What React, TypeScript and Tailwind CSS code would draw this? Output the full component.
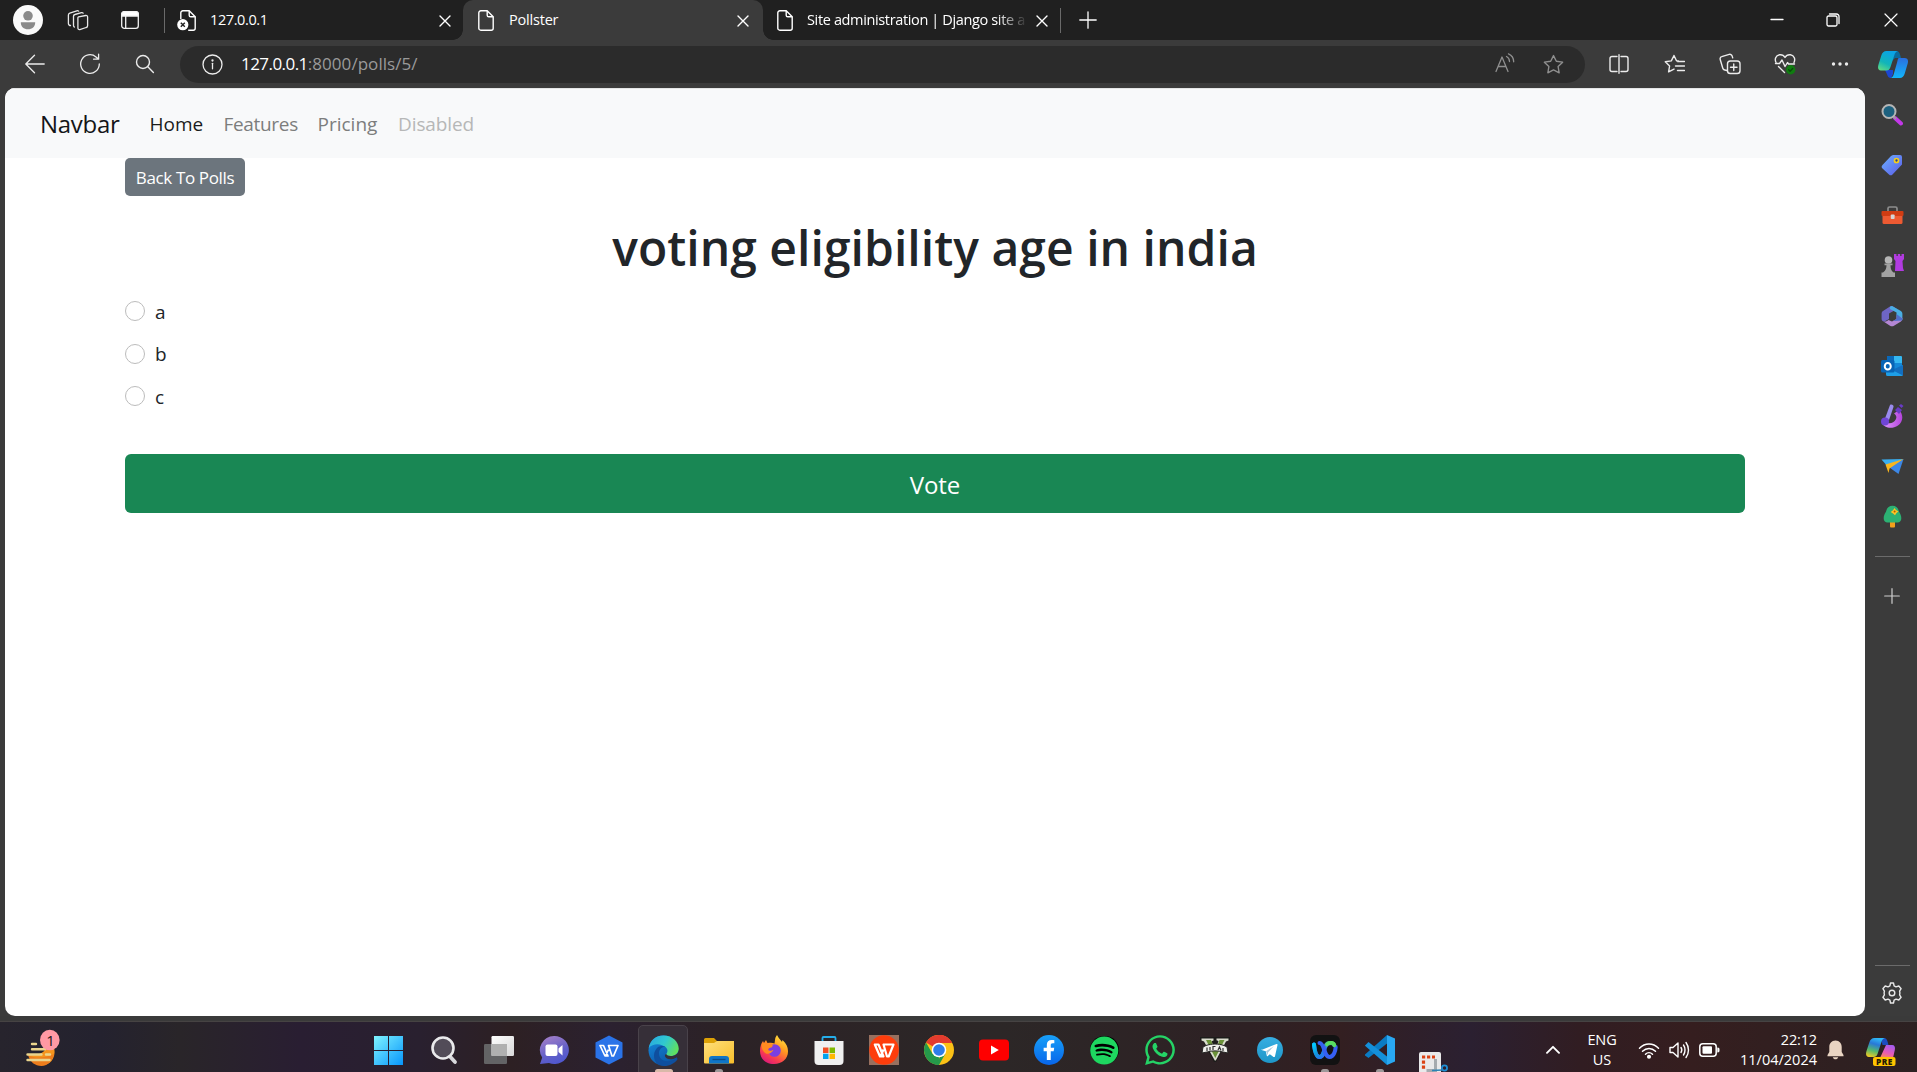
import React, { type ReactNode } from 'react';
import { FaSpotify, FaWhatsapp, FaFacebookF } from 'react-icons/fa';

type IconProps = { children: ReactNode; size?: number; box?: number; className?: string; sw?: number };

function Line({ children, size = 24, box = 24, className = '', sw = 1.3 }: IconProps) {
  return (
    <svg width={size} height={size} viewBox={`0 0 ${box} ${box}`} fill="none" stroke="currentColor" strokeWidth={sw} strokeLinecap="round" strokeLinejoin="round" className={`shrink-0 ${className}`}>
      {children}
    </svg>
  );
}

function Color({ children, size = 24, box = 24, className = '' }: IconProps) {
  return (
    <svg width={size} height={size} viewBox={`0 0 ${box} ${box}`} className={`shrink-0 ${className}`}>
      {children}
    </svg>
  );
}

function CloseIcon() {
  return (
    <Line size={12} box={12} sw={1.4}>
      <path d="M1 1l10 10M11 1L1 11" />
    </Line>
  );
}

function PageIcon() {
  return (
    <svg width="16" height="21" viewBox="0 0 16 21" fill="none" stroke="#fff" strokeWidth="1.4" strokeLinejoin="round" className="shrink-0">
      <path d="M2.8.8h6.4l6 6v11.4a2 2 0 0 1-2 2H2.8a2 2 0 0 1-2-2V2.8a2 2 0 0 1 2-2z" />
      <path d="M9.2.8v4.4a1.6 1.6 0 0 0 1.6 1.6h4.4" />
    </svg>
  );
}

function ErrorPageIcon() {
  return (
    <svg width="19" height="21" viewBox="0 0 19 21" fill="none" stroke="#fff" strokeWidth="1.4" strokeLinejoin="round" className="shrink-0">
      <path d="M3.8 9V2.8a2 2 0 0 1 2-2h6.4l6 6v11.4a2 2 0 0 1-2 2h-5" />
      <path d="M12.2.8v4.4a1.6 1.6 0 0 0 1.6 1.6h4.4" />
      <circle cx="5.8" cy="14.7" r="5.6" fill="#fff" stroke="none" />
      <path d="M3.8 12.7l4 4M7.8 12.7l-4 4" stroke="#202020" />
    </svg>
  );
}

function TabStrip() {
  return (
    <div className="flex h-10 items-center bg-[#202020] text-[14.5px] text-white">
      <svg width="30" height="30" viewBox="0 0 30 30" className="ml-[13px] shrink-0">
        <circle cx="15" cy="15" r="15" fill="#fafafa" />
        <circle cx="15" cy="10.8" r="4.8" fill="#8a8a8a" />
        <path d="M7.8 17.2h14.4c0 4.800-3 7-7.200 7s-7.200-2.200-7.200-7z" fill="#8a8a8a" />
      </svg>
      <svg width="22" height="22" viewBox="0 0 22 22" fill="none" stroke="#e8e8e8" strokeWidth="1.3" strokeLinejoin="round" className="ml-[24px] shrink-0">
        <path d="M11.500 7.800l7.200-1.300a1.600 1.600 0 0 1 1.900 1.500v8.700a1.800 1.800 0 0 1-1.500 1.800l-6.300 2.100a1.500 1.500 0 0 1-1.900-1.500V9.500a1.700 1.700 0 0 1 .6-1.700z" />
        <path d="M7.800 18.300a2 2 0 0 1-1.300-1.900V7.300c0-.9.500-1.600 1.400-1.800l6.600-1.800c.9-.2 1.700.2 1.900 1" />
        <path d="M4 16.400a2 2 0 0 1-2.600-1.900V6c0-.9.500-1.600 1.400-1.900l7-2.300c.9-.3 1.800 0 2 .9" />
      </svg>
      <svg width="18" height="18" viewBox="0 0 18 18" fill="none" stroke="#f2f2f2" strokeWidth="1.300" className="ml-[32px] shrink-0">
        <rect x=".7" y=".7" width="16.600" height="16.600" rx="2.600" />
        <path d="M.7 5V3.200A2.500 2.500 0 0 1 3.200.7h11.600a2.500 2.500 0 0 1 2.500 2.500V5z" fill="#fff" />
        <path d="M4.700 5v12" />
      </svg>
      <div className="ml-[25px] h-[25px] w-px bg-[#6a6a6a]" />
      <div className="ml-[12px] flex w-[286px] items-center">
        <ErrorPageIcon />
        <span className="ml-[14px] flex-1 tracking-[-0.400px]">127.0.0.1</span>
        <div className="mr-[12px] pt-px"><CloseIcon /></div>
      </div>
      <div className="flex h-10 w-[300px] items-center rounded-t-[10px] bg-[#3b3b3b]">
        <div className="-ml-[10px] h-[10px] w-[10px] self-end bg-[radial-gradient(circle_at_0_0,#202020_9.500px,#3b3b3b_10px)]" />
        <div className="ml-[15px]"><PageIcon /></div>
        <span className="ml-[15px] flex-1 tracking-[-0.2px]">Pollster</span>
        <div className="mr-[14px] pt-px"><CloseIcon /></div>
        <div className="-mr-[10px] h-[10px] w-[10px] self-end bg-[radial-gradient(circle_at_100%_0,#202020_9.500px,#3b3b3b_10px)]" />
      </div>
      <div className="ml-[14px]"><PageIcon /></div>
      <div className="ml-[14px] w-[218px] whitespace-nowrap tracking-[-0.360px] [mask-image:linear-gradient(to_right,#000_190px,transparent_221px)]">
        Site administration | Django site a
      </div>
      <div className="ml-[11px] pt-px"><CloseIcon /></div>
      <div className="ml-[12px] h-[25px] w-px bg-[#6a6a6a]" />
      <Line size={18} box={18} className="ml-[18px]"><path d="M9 .8v16.400M.8 9h16.400" /></Line>
      <div className="ml-auto flex items-center">
        <Line size={14} box={14} className="mr-[42px]"><path d="M1 6.500h12" /></Line>
        <Line size={14} box={14} className="mr-[44px]">
          <rect x="1" y="3" width="10" height="10" rx="1.500" />
          <path d="M3.500 1h7A2.500 2.500 0 0 1 13 3.500v7" />
        </Line>
        <Line size={14} box={14} className="mr-[19px]" sw={1.200}><path d="M1 1l12 12M13 1L1 13" /></Line>
      </div>
    </div>
  );
}

const STAR = 'M10 1.500l2.700 5.400 6 .9-4.300 4.200 1 5.900L10 15.100l-5.400 2.800 1-5.900L1.300 7.800l6-.9z';

function Toolbar() {
  return (
    <div className="flex h-12 items-center bg-[#3b3b3b] text-[#ececec]">
      <Line size={20} box={20} className="ml-[25px]"><path d="M19.200 10H1M9.500 1.200L.8 10l8.700 8.800" /></Line>
      <Line size={22} box={22} className="ml-[34px]"><path d="M20.300 11A9.300 9.300 0 1 1 17 3.900l2.500 2.200M19.600 1.200v5h-5" /></Line>
      <Line size={20} box={20} className="ml-[34px]" sw={1.400}><circle cx="8" cy="8" r="6.500" /><path d="M12.800 12.800l5.600 5.600" /></Line>
      <div className="ml-[25px] flex h-[37px] w-[1405px] items-center rounded-full bg-[#2b2b2b] pl-[22px] text-[17px]">
        <Line size={21} box={21}><circle cx="10.500" cy="10.500" r="9.500" /><path d="M10.500 9.300v5.500" /><circle cx="10.500" cy="6.500" r=".5" fill="currentColor" /></Line>
        <span className="ml-[18px] tracking-[-0.55px] text-white">127.0.0.1</span>
        <span className="tracking-[0.050px] text-[#9a9a9a]">:8000/polls/5/</span>
        <div className="ml-auto mr-[21px] flex items-center gap-[29px] text-[#8f8f8f]">
          <Line size={20} box={20} className="relative left-px -top-px">
            <path d="M1 18.500L7 4l6 14.500M3.300 13.500h7.500M11.500 3.500c2.200 1 3 2.700 3 5M13.500.8c3.500 1.500 5.200 4.500 5.200 8" />
          </Line>
          <Line size={21} box={20}><path d={STAR} /></Line>
        </div>
      </div>
      <div className="ml-[24px] flex items-center">
        <Line size={20} box={20} sw={1.400}><path d="M8 2.500H3A2 2 0 0 0 1 4.500v11a2 2 0 0 0 2 2h5M12 2.500h5a2 2 0 0 1 2 2v11a2 2 0 0 1-2 2h-5M10 .7v18.600" /></Line>
        <Line size={21} box={21} className="ml-[35px]" sw={1.400}>
          <path d="M14.500 7l-2-.2L10 1.500 7.300 6.900l-6 .9L5.600 12l-1 5.900 5.400-2.800M13.500 7.500h7M11.500 12h9M13.500 16.500h7" />
        </Line>
        <Line size={22} box={22} className="ml-[34px]" sw={1.400}>
          <rect x="8.500" y="8" width="12.500" height="12.500" rx="2.800" />
          <path d="M14.750 11v6.500M11.500 14.250H18M8 17.500l-2.300-.5a2.500 2.500 0 0 1-1.900-1.800L1.200 6.500A2.200 2.200 0 0 1 2.700 3.700l7.500-2.300a2.300 2.300 0 0 1 2.900 1.500l.6 2" />
        </Line>
        <Line size={22} box={22} className="ml-[33px]" sw={1.400}>
          <path d="M2 9.500C.5 6.500 1.500 2.500 5.500 1.800 8 1.400 10 2.800 11 4.500c1-1.700 3-3.100 5.500-2.700 4 .7 5 4.700 3.500 7.700M1.500 10.500h4L8 7l3 6.500 2.500-4 1 1.500h6M4.500 13.500l6 6" />
          <circle cx="16.700" cy="16.800" r="4.700" fill="#107c10" stroke="none" />
          <path d="M14.700 16.800l1.400 1.500 2.600-2.800" stroke="#0a4d0a" />
        </Line>
        <Line size={18} box={18} className="ml-[35px]"><g fill="currentColor" stroke="none"><circle cx="2.500" cy="9" r="1.700" /><circle cx="9" cy="9" r="1.700" /><circle cx="15.500" cy="9" r="1.700" /></g></Line>
      </div>
      <div className="ml-auto mr-[9px]"><Copilot /></div>
    </div>
  );
}

function Copilot() {
  return (
    <svg width="30" height="27" viewBox="0 0 30 27">
      <defs>
        <linearGradient id="cpA" x1="0" y1="1" x2=".5" y2="0"><stop offset="0" stopColor="#6be07c" /><stop offset=".45" stopColor="#12b5b8" /><stop offset="1" stopColor="#0aa3e6" /></linearGradient>
        <linearGradient id="cpB" x1="0" y1="0" x2="0" y2="1"><stop offset="0" stopColor="#2a6fe0" /><stop offset="1" stopColor="#12b6fb" /></linearGradient>
      </defs>
      <path d="M17 0h1.500c2 0 2.800 1.200 3.500 3.500l1 3.500h-6l-3 3z" fill="#0a6a9e" />
      <path d="M7 19h8v4l-2 4c-2 0-3.200-1-3.900-3.500z" fill="#1b47d1" />
      <path d="M8.500 0H20c-2 .5-3 2-3.600 4L12.500 16c-.9 2.500-1.800 3.500-4 3.500H3c-3 0-3.500-2.500-2.500-6L3.300 4.500C4.300 1.500 5.800 0 8.500 0z" fill="url(#cpA)" />
      <path d="M21 7h5.500c3 0 4.100 2 3.200 5.500l-2.800 9.500c-1 3.500-2.500 5-5.200 5H12.500c2-.5 2.700-2 3.300-4l3.400-12C19.800 8.500 20 7 21 7z" fill="url(#cpB)" />
    </svg>
  );
}

function SidebarIcons() {
  const icons: ReactNode[] = [
    <Color key="search" size={22} box={22}>
      <path d="M14 14l6 5.500" stroke="#c238e8" strokeWidth="4" strokeLinecap="round" />
      <path d="M12.500 12.500l2.500 2.500" stroke="#9c9c9c" strokeWidth="2" />
      <circle cx="8" cy="7.500" r="6.500" fill="#1d617f" stroke="#b5b5b5" strokeWidth="2" />
    </Color>,
    <Color key="tag" size={22} box={22}>
      <defs><linearGradient id="tag" x1="0" y1="0" x2="1" y2="1"><stop offset="0" stopColor="#6db2ff" /><stop offset="1" stopColor="#5a5ae8" /></linearGradient></defs>
      <path d="M12 1h7a2 2 0 0 1 2 2v7.500L11.500 20.500a2.500 2.500 0 0 1-3.500 0L1.500 14.500a2.500 2.500 0 0 1 0-3.500L10 2z" fill="url(#tag)" />
      <circle cx="15.500" cy="6.500" r="2" fill="#24418e" stroke="#f6ce1c" strokeWidth="1.700" />
    </Color>,
    <Color key="tools" size={23} box={23}>
      <path d="M7 7V4.500A1.500 1.500 0 0 1 8.500 3h6A1.500 1.500 0 0 1 16 4.500V7" fill="none" stroke="#8d8d8d" strokeWidth="1.700" />
      <rect x="1.500" y="10" width="20" height="10" rx="1.500" fill="#ed5a32" />
      <rect x=".5" y="7" width="22" height="5" rx="1" fill="#d03c13" />
      <rect x="9.800" y="10.500" width="3.800" height="4.500" rx=".8" fill="#d5d5d5" />
    </Color>,
    <Color key="games" size={23} box={23}>
      <path d="M13 0h2.500v2h1.300V0h2.400v2h1.300V0H23v5l-1.500 2 .5 7 1 3h-9l.5-10L13 5z" fill="#b13be0" />
      <circle cx="7.500" cy="6" r="3.800" fill="#b6b6b6" />
      <path d="M3.500 9.500h8v1.800h-2c0 3 .5 5.200 3 7.200h1.500V23H.5v-4.500H2c2.700-2 3.500-4.200 3.500-7.200h-2z" fill="#a2a2a2" />
    </Color>,
    <Color key="m365" size={22} box={22}>
      <path d="M9 1.500L2 6C1 6.700.6 7.500.6 9v5c0 2 1.800 3.200 3.500 2.200L8 14V8.500l8-4.500-3.500-2.300C11.500 1 10 .9 9 1.500z" fill="#6e65c4" />
      <path d="M11 1l8.500 4.700C21 6.500 21.400 7.500 21.400 9v5.500L15.500 11V7.500L9 4c-.8-1.500.5-3 2-3z" fill="#49aee4" />
      <path d="M21.400 13.500c0 1.500-.5 2.200-1.500 2.900L13 20.800c-1.200.7-2.800.7-4 0l-6.500-4.200c2 .5 3-.3 5-1.500l3.500 1.400 4.500-2.500v-3l4.500 1z" fill="#b487d4" />
      <path d="M15.500 9v5L12 16l9-.5c.4-.6.4-1.500.4-2z" fill="#4e6ecb" />
    </Color>,
    <Color key="outlook" size={22} box={22}>
      <rect x="6" y="1" width="15" height="14" rx="1" fill="#35b8f1" /><path d="M6 1h7v7H6z" fill="#0a68b8" /><path d="M13 8h8v6h-8z" fill="#1488d8" />
      <path d="M5 10l8.500 5L22 10v9.500a1.500 1.500 0 0 1-1.500 1.500h-14A1.500 1.500 0 0 1 5 19.500z" fill="#1e9fe8" /><path d="M22 10v10.500L11 15z" fill="#136ebf" />
      <rect x="0" y="5" width="13.500" height="12.500" rx="1.500" fill="#0864b5" /><ellipse cx="6.750" cy="11.200" rx="3" ry="3.300" fill="none" stroke="#fff" strokeWidth="2" />
    </Color>,
    <Color key="designer" size={24} box={24}>
      <defs><linearGradient id="dsg" x1="0" y1="0" x2="1" y2="0"><stop offset="0" stopColor="#df9cff" /><stop offset="1" stopColor="#b544dc" /></linearGradient></defs>
      <path d="M4 16c2 4 9 5 12-1 1-2.500 0-4-2-5.500L19 6c5 5 4 12-1 15.500C12 25.500 4 24 2 19z" fill="url(#dsg)" />
      <path d="M10 1c1.500-1 4 0 3.500 2L9 16l-4-1.500z" fill="#9a8bed" /><circle cx="5" cy="17.500" r="4" fill="#7045d6" />
      <path d="M15 6l3-3 4 3-3 4zM19 1.500L21 0l2.500 2L21.500 4z" fill="#693bc5" />
    </Color>,
    <Color key="drop" size={23} box={23}>
      <path d="M.5 4.500L22.500 4 7 12z" fill="#3aaef0" /><path d="M22.500 4L7 11.500 17.500 19z" fill="#3c87e6" /><path d="M4.500 9.500L22.500 4 8.500 13.500 7.500 18z" fill="#f9b61d" />
    </Color>,
    <Color key="tree" size={23} box={23}>
      <rect x="9" y="16" width="5" height="6.500" rx="1" fill="#f3a01c" />
      <path d="M11.500.8c4 0 6 3 6.500 6 3 4 3.500 10-1 10.700H6c-4.500-.7-4-6.700-1-10.700.5-3 2.500-6 6.500-6z" fill="#2cb173" />
      <path d="M13.500 3l1.500 2 2.500 1.500L15.500 8 14 10.300 12 8.500 9.700 7l2.300-1.800z" fill="#ffc324" /><circle cx="13.600" cy="6.600" r="1" fill="#b05c00" />
    </Color>,
  ];
  return (
    <div className="flex w-[52px] flex-col items-center pl-[2px] pt-[2px]">
      {icons.map((icon, i) => (
        <div key={i} className="flex h-[50.200px] items-center justify-center">{icon}</div>
      ))}
      <div className="mt-[14px] h-px w-[35px] shrink-0 bg-[#6b6b6b]" />
      <Line size={16} box={16} className="mt-[31px] text-[#cfcfcf]" sw={1.200}><path d="M8 .7v14.600M.7 8h14.600" /></Line>
      <div className="mt-auto h-px w-[35px] shrink-0 bg-[#6b6b6b]" />
      <Line size={22} box={22} className="mb-[12px] mt-[16px] text-[#e8e8e8]" sw={1.400}>
        <path d="M9.500 1h3l.6 2.900 1.900 1 2.800-.9 2.300 2.700-1.500 2.500c.4 1.200.4 2.400 0 3.600l1.500 2.500-2.300 2.700-2.800-.9-1.900 1-.6 2.900h-3l-.6-2.900-1.900-1-2.800.9L1.900 15.300l1.500-2.500c-.4-1.200-.4-2.400 0-3.600L1.900 6.700 4.200 4l2.800.9 1.900-1z" />
        <circle cx="11" cy="11" r="2.800" />
      </Line>
    </div>
  );
}

function Poll() {
  return (
    <div className="ml-[5px] w-[1860px] overflow-hidden rounded-[10px] bg-white text-[#212529]">
      <nav className="flex h-[70px] items-center border-t border-[#e4e5e6] bg-[#f8f9fa] pl-[35px] pt-px text-[19px]">
        <span className="w-[109.500px] text-[24px] tracking-[-0.300px] text-[#141517]">Navbar</span>
        <span className="w-[74px] text-[#1a1b1b]">Home</span>
        <span className="w-[94px] tracking-[-0.320px] text-[#7c7d7d]">Features</span>
        <span className="w-[80.500px] text-[#7c7d7d]">Pricing</span>
        <span className="tracking-[-0.100px] text-[#b6b7b7]">Disabled</span>
      </nav>
      <main className="px-[120px]">
        <button className="block h-[38px] w-[120px] whitespace-nowrap rounded-[5px] bg-[#6c757d] pt-px text-[17px] tracking-[-0.360px] text-white">Back To Polls</button>
        <h1 className="mt-[22px] text-center text-[48px] font-semibold leading-[60px] tracking-[0.040px]">voting eligibility age in india</h1>
        <div className="mt-[12px] text-[19px]">
          {['a', 'b', 'c'].map((choice) => (
            <label key={choice} className="flex h-[42.500px] items-center">
              <span className="h-[20px] w-[20px] rounded-full border border-[#bcbcbc]" />
              <span className="ml-[10px] pt-[2px] leading-[25px]">{choice}</span>
            </label>
          ))}
        </div>
        <button className="mt-[36.500px] block h-[59px] w-full rounded-[6px] bg-[#198754] pt-[3px] text-[24px] tracking-[-0.100px] text-white">Vote</button>
      </main>
    </div>
  );
}

function CopilotPre() {
  return (
    <svg width="30" height="30" viewBox="0 0 30 30">
      <defs>
        <linearGradient id="preA" x1=".5" y1="0" x2=".2" y2="1"><stop offset="0" stopColor="#2fb6f5" /><stop offset=".3" stopColor="#2878d8" /><stop offset=".65" stopColor="#55b86c" /><stop offset="1" stopColor="#f3cb20" /></linearGradient>
        <linearGradient id="preB" x1=".7" y1="0" x2=".3" y2="1"><stop offset="0" stopColor="#a45cf0" /><stop offset=".6" stopColor="#e85bb5" /><stop offset="1" stopColor="#f88a5c" /></linearGradient>
      </defs>
      <path d="M15 1h3c3 0 3.500 3 4.500 7h-6z" fill="#1c4cc0" />
      <path d="M8.500 1H19c-2 .5-3 2-3.500 4l-4 12c-.8 2.300-2 3-4 3H3c-3 0-3.500-2.500-2.500-6L3.300 5.500C4.300 2.500 5.800 1 8.500 1z" fill="url(#preA)" />
      <path d="M20 8h6c2.600 0 3.500 2 2.800 5L27 21H14z" fill="url(#preB)" />
      <rect x="7" y="20" width="22.500" height="9" rx="2" fill="#ffc400" />
      <text x="18.400" y="27.500" textAnchor="middle" fontFamily="Open Sans, sans-serif" fontWeight="800" fontSize="8.300" letterSpacing=".5" fill="#231b05">PRE</text>
    </svg>
  );
}

const apps: { name: string; icon: ReactNode; mark?: string; active?: boolean }[] = [
  { name: 'start', icon: (
    <Color size={29} box={29}>
      <defs><linearGradient id="win" x1="0" y1="0" x2="1" y2="1"><stop offset="0" stopColor="#7ff4ff" /><stop offset="1" stopColor="#0795fb" /></linearGradient></defs>
      <path d="M0 0h14v14H0zM15 0h14v14H15zM0 15h14v14H0zM15 15h14v14H15z" fill="url(#win)" />
    </Color>) },
  { name: 'search', icon: (
    <Color size={30} box={30}><path d="M21 21.500l5 5.500" stroke="#d8d8dc" strokeWidth="3.800" strokeLinecap="round" /><circle cx="14" cy="13" r="10.500" fill="#524c58" stroke="#eaeaec" strokeWidth="2.600" /></Color>) },
  { name: 'taskview', icon: (
    <Color size={30} box={30}>
      <defs><linearGradient id="tv" x1="0" y1="0" x2="1" y2="1"><stop offset="0" stopColor="#fff" /><stop offset="1" stopColor="#d8d8d8" /></linearGradient></defs>
      <rect x="0" y="9" width="23" height="20" rx="1.200" fill="#636365" /><rect x="7.500" y="1" width="22.500" height="20" rx="1.200" fill="url(#tv)" /><path d="M7.500 9H23v12H7.500z" fill="#b0b0b0" />
    </Color>) },
  { name: 'chat', icon: (
    <Color size={30} box={30}>
      <defs><linearGradient id="chat" x1=".2" y1="0" x2=".6" y2="1"><stop offset="0" stopColor="#a47fc8" /><stop offset=".6" stopColor="#6360c8" /><stop offset="1" stopColor="#4f57cf" /></linearGradient></defs>
      <path d="M15 1a14.500 14 0 1 1-5 27L1 29l2.200-6.500A14.500 14 0 0 1 15 1z" fill="url(#chat)" /><rect x="6.500" y="9.500" width="12" height="11.500" rx="2" fill="#fff" /><path d="M19.500 13.500l4-3.500v10.500l-4-3.500z" fill="#fff" />
    </Color>) },
  { name: 'wps docs', icon: <Color size={30} box={30}><path d="M15 .5l13.500 7v15L15 29.500l-13.500-7v-15z" fill="#2a73e8" /><g fill="none" stroke="#fff" strokeWidth="1.700" strokeLinejoin="round"><path d="M6 10.500h3.500l4.500 10.500h-3zM11.500 21l3-6.500M14.500 10.500h9.500l-4.500 10.500h-1.500z" /></g></Color> },
  { name: 'edge', active: true, mark: 'w-[18px] bg-[#d9b9a9]', icon: (
    <Color size={31} box={31}>
      <defs>
        <linearGradient id="edA" x1="0" y1=".2" x2="1" y2=".6"><stop offset="0" stopColor="#29a9e0" /><stop offset=".5" stopColor="#30c8cf" /><stop offset="1" stopColor="#62e25b" /></linearGradient>
        <linearGradient id="edB" x1="0" y1="0" x2=".6" y2="1"><stop offset="0" stopColor="#168de0" /><stop offset="1" stopColor="#0b55a5" /></linearGradient>
      </defs>
      <circle cx="15.500" cy="15.500" r="15" fill="url(#edB)" />
      <path d="M.8 13C2 5 8 .5 15.500.5c9 0 15.200 6.500 15.200 13 0 5-4 7.500-8 7.500-3.500 0-4.800-1-4.300-2.200 1.500-2 1.500-4.500-.4-6.300C14 8.500 5 7.500.8 13z" fill="url(#edA)" />
      <path d="M18 12.500c-3-1.500-7 1-7 6 0 5.500 5 8.500 10.500 7.500 3-.5 5-1.500 7-3 .8-.6 1.700.3 1 1.200C27 28 22 31 16 31 9.500 31 6 26 6 21s3-10 8-10c2 0 3.500.8 4 1.500z" fill="#0f4f9e" />
      <path d="M31 15v9l-2-.5c.8-1 .2-1.500-1-.8-5 2.800-10 1.500-11-1.500-.4-1.200.6-2 1.400-2.400-.5 1.200.8 2.200 4.300 2.200 4 0 7.500-2 8.300-6z" fill="#362f38" />
    </Color>) },
  { name: 'explorer', mark: 'w-[8px] bg-[#9d9899]', icon: (
    <Color size={30} box={30}>
      <path d="M0 4.500A1.500 1.500 0 0 1 1.500 3h8.500l3 3H29a1 1 0 0 1 1 1v7H0z" fill="#dda106" />
      <defs><linearGradient id="fold" x1="0" y1="0" x2="1" y2="1"><stop offset="0" stopColor="#ffe07c" /><stop offset="1" stopColor="#f8be2b" /></linearGradient></defs>
      <path d="M0 8h10l3-2h17v21.500a1 1 0 0 1-1 1H1a1 1 0 0 1-1-1z" fill="url(#fold)" /><path d="M5 28.500V24a3 3 0 0 1 3-3h14a3 3 0 0 1 3 3v4.500z" fill="#0f75c7" /><path d="M8.500 24.500h13" stroke="#0b4c88" strokeWidth="1.300" />
    </Color>) },
  { name: 'firefox', icon: (
    <Color size={30} box={30}>
      <defs><linearGradient id="ff" x1=".85" y1="0" x2=".25" y2="1"><stop offset="0" stopColor="#fff045" /><stop offset=".4" stopColor="#ff9a1f" /><stop offset=".75" stopColor="#fa3c50" /><stop offset="1" stopColor="#d9187c" /></linearGradient></defs>
      <path d="M18 0c2 4 4 5 5 7l.5-2c4 4 5.500 7 5.500 11.500C29 24 23 29 15 29S1 24 1 16c0-4.500 1.500-8 3-10l1 2 2-3 1.500 3c3-.5 5-.5 7 .5L16 5c.2-2 .8-3.500 2-5z" fill="url(#ff)" />
      <circle cx="15.500" cy="15.500" r="6.300" fill="#7b3fe0" /><path d="M3 8c4 0 7 0 11 2.500l-1.500 2c-2 .5-3.500.5-3.500 2.500 2 1.500 4 .5 5.500-.2-1 3-5 5-8 3.500C3.500 16.500 2 12 3 8z" fill="#ff8a20" />
    </Color>) },
  { name: 'store', icon: (
    <Color size={30} box={30}>
      <path d="M8.500 7V3a1 1 0 0 1 1-1h11a1 1 0 0 1 1 1v4" fill="none" stroke="#25aeea" strokeWidth="1.800" /><path d="M.5 6h29v20a4 4 0 0 1-4 4h-21a4 4 0 0 1-4-4z" fill="#f0f0f0" />
      <path d="M9 12.500h5.500V18H9z" fill="#f04e23" /><path d="M15.500 12.500H21V18h-5.500z" fill="#7fb900" /><path d="M9 18.700h5.500v5.300H9z" fill="#00a3ee" /><path d="M15.500 18.700H21v5.300h-5.500z" fill="#ffb801" />
    </Color>) },
  { name: 'wps', icon: <Color size={30} box={30}><rect width="30" height="30" fill="#98705f" /><circle cx="15" cy="15" r="14.800" fill="#fd3d0c" /><g fill="none" stroke="#fff" strokeWidth="2.200" strokeLinejoin="round"><path d="M5.800 9.500h3.700l5 12h-3.500zM11.500 21.500l3-7M14.500 9.500h10l-4.800 12h-1.700z" /></g></Color> },
  { name: 'chrome', icon: (
    <Color size={30} box={30}>
      <circle cx="15" cy="15" r="15" fill="#fbc116" /><path d="M15 15L2 7.500A15 15 0 0 1 28 7.500H15z" fill="#e33b2e" /><path d="M15 0A15 15 0 0 1 28 8H15z" fill="#e33b2e" />
      <path d="M2 7.500l6.500 11.300L15 22l-.2 8A15 15 0 0 1 2 7.500z" fill="#25994a" /><path d="M21.500 18.500L15 30l-3-.3 4-8z" fill="#25994a" /><circle cx="15" cy="15" r="7.300" fill="#fff" /><circle cx="15" cy="15" r="5.800" fill="#2f7de9" />
    </Color>) },
  { name: 'youtube', icon: <Color size={30} box={30}><rect x="0" y="4.500" width="30" height="21" rx="4" fill="#fe0000" /><path d="M12 10.500v9l7.800-4.500z" fill="#fff" /></Color> },
  { name: 'facebook', icon: <span className="flex h-[30px] w-[30px] items-center justify-center rounded-full bg-[linear-gradient(#18a0f8,#0865ea)] text-white"><FaFacebookF size={20} /></span> },
  { name: 'spotify', icon: <span className="flex h-[28.500px] w-[28.500px] items-center justify-center rounded-full bg-black text-[#1ed760]"><FaSpotify size={29} /></span> },
  { name: 'whatsapp', icon: <FaWhatsapp size={34} className="shrink-0 text-[#25d366]" /> },
  { name: 'gta', icon: (
    <Color size={30} box={30}>
      <path d="M0 2h30v3l-3 1-11 21h-2L3 6 0 5z" fill="#1c1c1a" /><path d="M1.500 3.500h12v2l-2 .8L15.500 15l3-9-2-.8V3.500h12v2L26 6.500 15.800 25.500h-1L4 6.500 1.500 5.500z" fill="#d9dccd" /><path d="M6 5h5l4.500 11 4-11h5L15.300 23z" fill="#6b9238" />
      <path d="M3 12l3-1.500c6-2 12-2 18 0l3 1.500 1 6-5-1c-5-1.500-11-1.500-16 0l-5 1z" fill="#efefeb" stroke="#272725" strokeWidth="1" /><path d="M7 16v-3.500M10 15.500V12M13 15v-3.500h2.500M18 15l1.500-3 1.500 3.500M23 16v-3" stroke="#333" strokeWidth="1.200" fill="none" />
    </Color>) },
  { name: 'telegram', icon: <Color size={26} box={26}><defs><linearGradient id="tg" x1="0" y1="0" x2="0" y2="1"><stop offset="0" stopColor="#37aee2" /><stop offset="1" stopColor="#1e96c8" /></linearGradient></defs><circle cx="13" cy="13" r="13" fill="url(#tg)" /><path d="M5 12.800L19.500 7c.8-.3 1.200.2 1 1L18 19.300c-.2.900-.8 1-1.500.6l-3.700-2.700-2 1.900c-.5.400-.9.200-1-.4l-1-4.500-3.500-1c-.8-.2-.8-.8-.3-1.400z" fill="#fff" /><path d="M9 14.300l8-5.300-6 6.500-.2 2.800z" fill="#a8c9dc" /></Color> },
  { name: 'webex', mark: 'w-[8px] bg-[#9d9899]', icon: (
    <Color size={30} box={30}>
      <defs><linearGradient id="wbA" x1="0" y1="0" x2="1" y2="1"><stop offset="0" stopColor="#0cf" /><stop offset=".5" stopColor="#1295d8" /><stop offset="1" stopColor="#2e6ff5" /></linearGradient><linearGradient id="wbB" x1="1" y1="0" x2="0" y2="1"><stop offset="0" stopColor="#4fe055" /><stop offset=".4" stopColor="#3173f4" /><stop offset="1" stopColor="#3a35e8" /></linearGradient></defs>
      <rect width="30" height="30" rx="6" fill="#121212" />
      <path d="M4 9.500C4.500 14 6 22 9.500 22c4 0 4-5.500 5.500-9.500S17.500 8 21 8c1.500 0 2.500.8 3 2" fill="none" stroke="url(#wbB)" strokeWidth="4" strokeLinecap="round" />
      <path d="M4 9.500C4.500 14 6 22 9.500 22c2.500 0 3.500-2 4.500-5" fill="none" stroke="url(#wbA)" strokeWidth="4" strokeLinecap="round" />
      <path d="M9.500 8c5 0 4.500 14 10 14C24 22 25.500 15 25.700 12" fill="none" stroke="#3560f2" strokeWidth="4" strokeLinecap="round" />
      <path d="M17 9.500c1-1.300 2.300-1.700 4-1.700 1.800 0 3 1 3.500 2.500" fill="none" stroke="#58dc60" strokeWidth="3.600" strokeLinecap="round" />
    </Color>) },
  { name: 'vscode', mark: 'w-[8px] bg-[#9d9899]', icon: <Color size={30} box={30}><path d="M22 0l8 3.500v23L22 30z" fill="#29a8f2" /><path d="M22 0v8.500L3.500 23 0 20.500v-1z" fill="#0a7cc4" /><path d="M0 10.500L3.500 7 22 21.500V30L0 10.700z" fill="#1490da" /></Color> },
];

function Taskbar() {
  return (
    <div className="h-[51px] overflow-hidden border-t border-[#464343] bg-[linear-gradient(90deg,#27242d_0px,#24222f_100px,#292529_180px,#291e32_300px,#29202f_420px,#2d2023_510px,#2b2130_610px,#2c2226_720px,#2c2727_1000px,#2e2124_1250px,#331f21_1340px,#2b2031_1470px,#311d22_1580px,#351e1f_1690px,#2c2122_1917px)]">
      <div className="flex h-[56px] items-center text-[14.500px] leading-[20px] text-white">
        <div className="flex w-[361px] shrink-0 pb-[5px] pl-[26px]">
          <svg width="36" height="40" viewBox="0 0 36 40">
            <path d="M2 26c5 2 11 1 15-2s5-8 5-12c7 4 9 14 3.500 21-6 7-19 5-23.500-7z" fill="#f5941d" /><path d="M2 27c7 4 18 3 26-1-1 6-6 12-12.500 12S4 34 2 27z" fill="#ed7d1c" />
            <path d="M6 16h4M6 21.300h13M1.500 26.500h14M20 26.500h4M1.500 32h22" stroke="#ead58d" strokeWidth="2.400" strokeLinecap="round" />
            <ellipse cx="23.800" cy="12" rx="9.800" ry="10.300" fill="#ff99a4" />
            <text x="24.500" y="17.500" textAnchor="middle" fontFamily="Open Sans, sans-serif" fontSize="15" fill="#1c1416">1</text>
          </svg>
        </div>
        {apps.map((app) => (
          <div key={app.name} className="relative flex h-[56px] w-[55.080px] shrink-0 items-center justify-center">
            {app.active && <div className="absolute left-[2px] top-[3px] h-[52px] w-[50px] rounded-[5px] border border-[#49424a] bg-[#362f38]" />}
            <div className="relative">{app.icon}</div>
            {app.mark && <div className={`absolute top-[47px] h-[5px] rounded-full ${app.mark}`} />}
          </div>
        ))}
        <svg width="31" height="30" viewBox="0 0 31 30" className="ml-[11px] mt-[34px] shrink-0">
          <rect x="1" y="0" width="22" height="26" rx="2" fill="#e9e9ea" /><path d="M17.500 7v11.500h-9" fill="none" stroke="#a5aaae" strokeWidth="3" />
          <path d="M4 5h13M5.500 8.500v10" fill="none" stroke="#db4214" strokeWidth="3.200" strokeDasharray="3.200 1.800" /><circle cx="26.500" cy="16" r="2.600" fill="none" stroke="#1e8fd5" strokeWidth="1.700" /><path d="M24.500 18L14 18.500" stroke="#2c83b5" strokeWidth="1.500" />
        </svg>
        <div className="ml-auto flex shrink-0 items-center">
          <Line size={14} box={14} sw={1.900} className="mr-[27px]"><path d="M1 9.800l6-6 6 6" /></Line>
          <div className="mr-[21px] w-[30px] text-center tracking-[-0.100px]"><div>ENG</div><div>US</div></div>
          <svg width="22" height="22" viewBox="0 0 22 22" fill="none" stroke="#fff" strokeWidth="1.500" strokeLinecap="round" className="mr-[9px]">
            <path d="M1.500 9.200c5.500-5.500 13.500-5.500 19 0M4.500 12.300c3.800-3.800 9.200-3.800 13 0M7.500 15.200c2-2 5-2 7 0" /><circle cx="11" cy="17.800" r="1.300" fill="#fff" />
          </svg>
          <svg width="21" height="20" viewBox="0 0 21 20" fill="none" stroke="#fff" strokeWidth="1.400" strokeLinejoin="round" strokeLinecap="round" className="mr-[9px]">
            <path d="M1 7.500h3L9 3v14l-5-4.500H1zM12 7.500c1 1.500 1 3.500 0 5M14.500 5c2 2.800 2 7.200 0 10M17 2.500c3.300 4.500 3.300 10.500 0 15" />
          </svg>
          <svg width="21" height="14" viewBox="0 0 21 14" className="mr-[19px]">
            <rect x=".8" y=".8" width="16.400" height="12.400" rx="3" fill="none" stroke="#fff" strokeWidth="1.500" /><rect x="3.500" y="3.300" width="9.500" height="7.400" rx="1" fill="#fff" /><path d="M18.300 4.500c2 0 2.200.8 2.200 2.500s-.2 2.500-2.200 2.500z" fill="#fff" />
          </svg>
          <div className="mr-[10px] w-[78px] text-right"><div className="tracking-[-0.150px]">22:12</div><div>11/04/2024</div></div>
          <svg width="17" height="20" viewBox="0 0 17 20" className="mr-[22px]"><path d="M8.500.5c4 0 6.200 3 6.200 6.500V12l1.800 3v1.200H.5V15l1.800-3V7C2.300 3.500 4.500.5 8.500.5z" fill="#e9d4c2" /><path d="M5.800 17.300h5.400c-.5 1.500-1.500 2-2.700 2s-2.200-.5-2.700-2z" fill="#e9d4c2" /></svg>
          <div className="mr-[21px] mt-[3px]"><CopilotPre /></div>
        </div>
      </div>
    </div>
  );
}

export default function App() {
  return (
    <div className="flex h-[1072px] w-[1917px] flex-col overflow-hidden bg-[#3b3b3b] font-['Open_Sans',sans-serif]">
      <TabStrip />
      <Toolbar />
      <div className="flex h-[928px]">
        <Poll />
        <SidebarIcons />
      </div>
      <div className="h-[5px] bg-[#3a3a3a]" />
      <Taskbar />
    </div>
  );
}
